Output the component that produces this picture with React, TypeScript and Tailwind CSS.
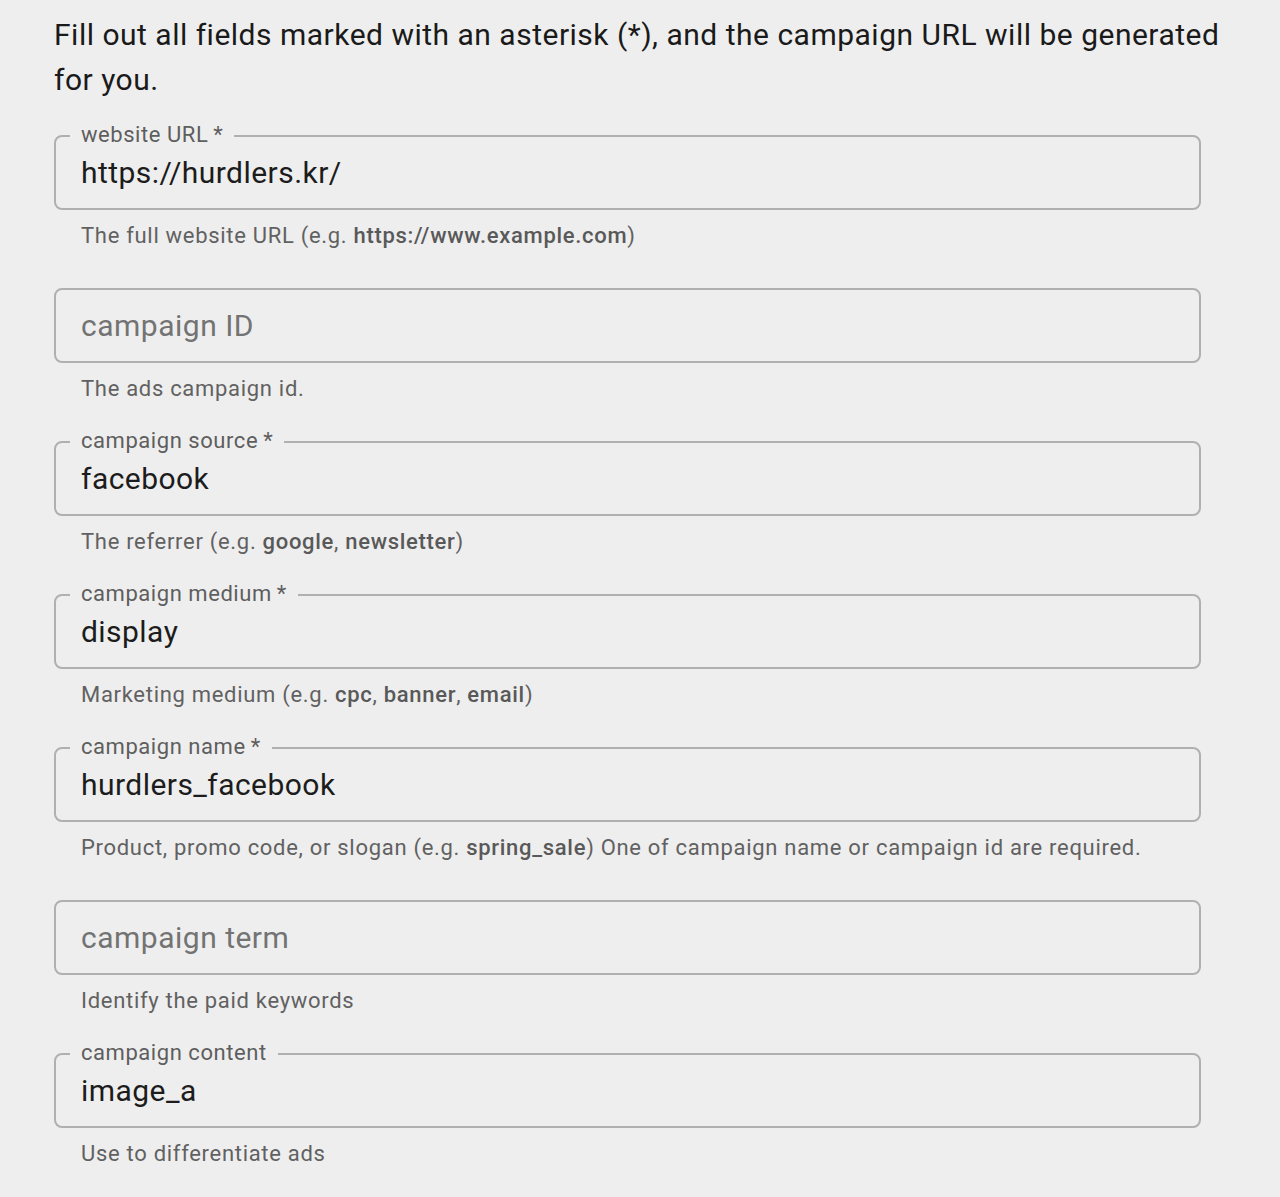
import React from 'react';

type Field = {
  label: string;
  required?: boolean;
  value?: string;
  placeholder?: string;
  helper: React.ReactNode;
};

const B = ({ children }: { children: React.ReactNode }) => (
  <span className="font-medium text-[#595959]">{children}</span>
);

const fields: Field[] = [
  {
    label: 'website URL',
    required: true,
    value: 'https://hurdlers.kr/',
    helper: (
      <>
        The full website URL (e.g. <B>https://www.example.com</B>)
      </>
    ),
  },
  {
    label: 'campaign ID',
    placeholder: 'campaign ID',
    helper: 'The ads campaign id.',
  },
  {
    label: 'campaign source',
    required: true,
    value: 'facebook',
    helper: (
      <>
        The referrer (e.g. <B>google</B>, <B>newsletter</B>)
      </>
    ),
  },
  {
    label: 'campaign medium',
    required: true,
    value: 'display',
    helper: (
      <>
        Marketing medium (e.g. <B>cpc</B>, <B>banner</B>, <B>email</B>)
      </>
    ),
  },
  {
    label: 'campaign name',
    required: true,
    value: 'hurdlers_facebook',
    helper: (
      <>
        Product, promo code, or slogan (e.g. <B>spring_sale</B>) One of campaign name or campaign id are
        required.
      </>
    ),
  },
  {
    label: 'campaign term',
    placeholder: 'campaign term',
    helper: 'Identify the paid keywords',
  },
  {
    label: 'campaign content',
    value: 'image_a',
    helper: 'Use to differentiate ads',
  },
];

function OutlinedField({ field }: { field: Field }) {
  const hasValue = !!field.value;
  return (
    <div className="h-[153px]">
      <div className="relative h-[75px] rounded-[8px] border-2 border-[#b0b0b0] flex items-center px-[25px]">
        {hasValue && (
          <span className="absolute left-[14px] top-[-2px] -translate-y-1/2 bg-[#eeeeee] px-[11px] text-[22px] leading-[24px] tracking-[0.55px] text-[#5e5e5e]">
            {field.label}
            {field.required && '\u2009*'}
          </span>
        )}
        {hasValue ? (
          <span className="text-[30px] leading-[36px] tracking-[0.45px] text-[#1c1c1c]">{field.value}</span>
        ) : (
          <span className="text-[30px] leading-[36px] tracking-[0.5px] text-[#737373]">{field.placeholder}</span>
        )}
      </div>
      <p className="mt-[10px] pl-[27px] text-[22px] leading-[32px] tracking-[0.7px] text-[#616161] whitespace-nowrap">
        {field.helper}
      </p>
    </div>
  );
}

export default function App() {
  return (
    <div className="min-h-[1197px] bg-[#eeeeee] pl-[54px] pt-[12px] font-['Roboto',sans-serif]">
      <p className="w-[1190px] text-[30px] leading-[45px] tracking-[0.5px] text-[#1a1a1a]">
        Fill out all fields marked with an asterisk (*), and the campaign URL will be generated for you.
      </p>
      <div className="mt-[33px] w-[1147px] flex flex-col">
        {fields.map((f) => (
          <OutlinedField key={f.label} field={f} />
        ))}
      </div>
    </div>
  );
}
